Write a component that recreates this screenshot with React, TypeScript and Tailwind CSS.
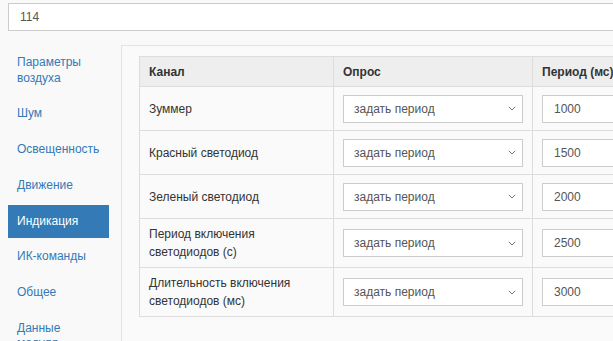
import React from "react";

const navItems = [
  "Параметры воздуха",
  "Шум",
  "Освещенность",
  "Движение",
  "Индикация",
  "ИК-команды",
  "Общее",
  "Данные модуля",
];

const rows = [
  { name: "Зуммер", value: "1000", tall: false },
  { name: "Красный светодиод", value: "1500", tall: false },
  { name: "Зеленый светодиод", value: "2000", tall: false },
  { name: "Период включения светодиодов (с)", value: "2500", tall: true },
  { name: "Длительность включения светодиодов (мс)", value: "3000", tall: true },
];

function Chevron() {
  return (
    <svg width="8" height="5" viewBox="0 0 8 5" className="shrink-0">
      <path d="M0.8 0.8 L4 4 L7.2 0.8" fill="none" stroke="#777" strokeWidth="1" />
    </svg>
  );
}

export default function App() {
  return (
    <div
      className="w-[613px] h-[341px] overflow-hidden bg-[#f9f9f9] text-[12px] text-[#333]"
      style={{ fontFamily: '"Liberation Sans", Arial, sans-serif' }}
    >
      <div className="pt-[3px] pl-[8px]">
        <div className="w-[700px] h-[28px] border border-[#ccc] bg-white flex items-center pl-[11px] text-[#555]">
          114
        </div>
      </div>
      <div className="flex mt-[14px] pl-[8px]">
        <div className="w-[101px] shrink-0 flex flex-col gap-[2px] pt-[1px]">
          {navItems.map((n) => {
            const active = n === "Индикация";
            return (
              <div
                key={n}
                className={
                  "pl-[9px] pr-[15px] py-[9px] leading-[15.7px] " +
                  (active ? "bg-[#337ab7] text-white" : "text-[#337ab7]")
                }
              >
                {n}
              </div>
            );
          })}
        </div>
        <div className="ml-[12px] w-[600px] shrink-0 h-[400px] border-l border-t border-[#e3e3e3] bg-[#fafafa] pl-[17px] pt-[10px]">
          <div className="grid grid-cols-[194px_199px_200px] border-l border-t border-[#ddd]">
            <div className="h-[30px] bg-[#eee] border-r border-b border-[#ddd] flex items-center px-[9px] font-bold">
              Канал
            </div>
            <div className="h-[30px] bg-[#eee] border-r border-b border-[#ddd] flex items-center px-[9px] font-bold">
              Опрос
            </div>
            <div className="h-[30px] bg-[#eee] border-r border-b border-[#ddd] flex items-center px-[9px] font-bold">
              Период (мс)
            </div>
            {rows.map((r) => (
              <React.Fragment key={r.name}>
                <div
                  className={
                    (r.tall ? "h-[49px] " : "h-[44px] ") +
                    "border-r border-b border-[#ddd] flex items-center px-[9px] leading-[18px]"
                  }
                >
                  {r.name}
                </div>
                <div
                  className={
                    (r.tall ? "h-[49px] " : "h-[44px] ") +
                    "border-r border-b border-[#ddd] flex items-center px-[9px]"
                  }
                >
                  <div className="w-full h-[28px] border border-[#ccc] bg-white flex items-center justify-between pl-[10px] pr-[6px] text-[#555]">
                    <span>задать период</span>
                    <Chevron />
                  </div>
                </div>
                <div
                  className={
                    (r.tall ? "h-[49px] " : "h-[44px] ") +
                    "border-r border-b border-[#ddd] flex items-center pl-[9px]"
                  }
                >
                  <div className="w-full h-[28px] border border-[#ccc] bg-white flex items-center pl-[11px] text-[#555]">
                    {r.value}
                  </div>
                </div>
              </React.Fragment>
            ))}
          </div>
        </div>
      </div>
    </div>
  );
}
